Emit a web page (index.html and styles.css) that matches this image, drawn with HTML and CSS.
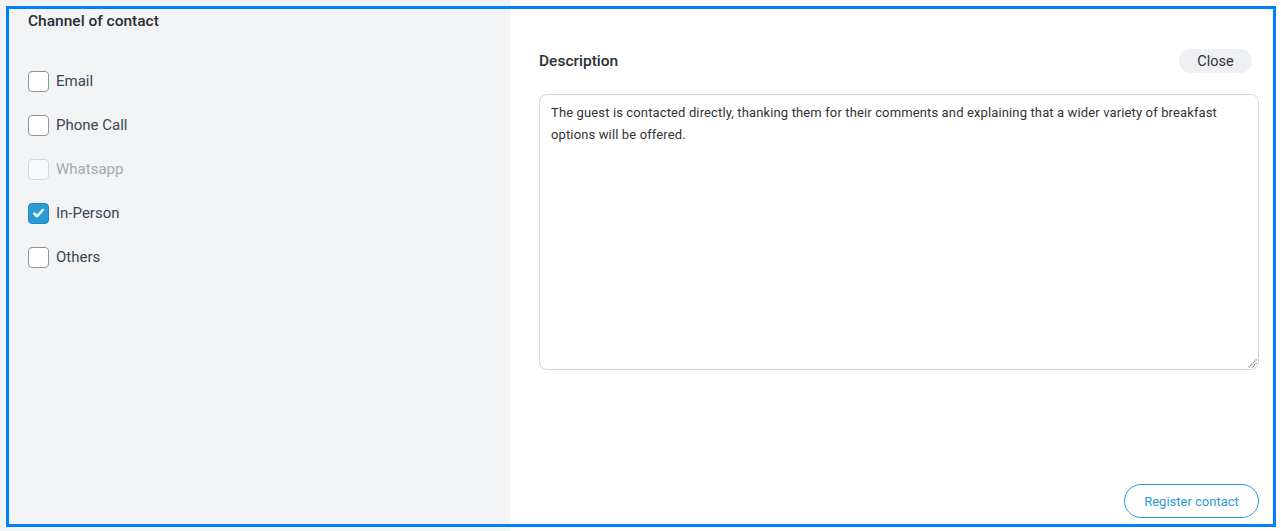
FILE: index.html
```html
<!DOCTYPE html>
<html>
<head>
<meta charset="utf-8">
<link rel="stylesheet" href="styles.css">
</head>
<body>
<div class="page">
  <aside class="side">
    <h2 class="side-title">Channel of contact</h2>
    <ul class="options">
      <li class="opt"><span class="box"></span><span class="lbl">Email</span></li>
      <li class="opt"><span class="box"></span><span class="lbl">Phone Call</span></li>
      <li class="opt disabled"><span class="box"></span><span class="lbl">Whatsapp</span></li>
      <li class="opt checked"><span class="box"><svg viewBox="0 0 20 20" width="20" height="20"><path d="M5.5 10.5 L8.6 13.4 L14.5 6.8" fill="none" stroke="#fff" stroke-width="2.6" stroke-linecap="round" stroke-linejoin="round"/></svg></span><span class="lbl">In-Person</span></li>
      <li class="opt"><span class="box"></span><span class="lbl">Others</span></li>
    </ul>
  </aside>
  <main class="main">
    <div class="head">
      <h3 class="head-title">Description</h3>
      <button class="close">Close</button>
    </div>
    <div class="area">The guest is contacted directly, thanking them for their comments and explaining that a wider variety of breakfast options will be offered.<svg class="grip" viewBox="0 0 10 10" width="10" height="10"><path d="M9.5 1.5 L1.5 9.5 M9.5 5 L5 9.5" stroke="#777" stroke-width="1.2" stroke-dasharray="1.2 0.8"/></svg></div>
    <div class="foot"><button class="register">Register contact</button></div>
  </main>
  <div class="focus-ring"></div>
</div>
</body>
</html>
```
FILE: styles.css
```css
* { box-sizing: border-box; }
html, body { margin: 0; padding: 0; }
body { font-family: Roboto, "Liberation Sans", sans-serif; width: 1281px; height: 531px; overflow: hidden; }
.page { position: relative; display: flex; width: 1281px; height: 531px; }
.side { width: 510px; background: #f2f3f5; padding: 11px 0 0 28px; }
.side-title { margin: 0; font-size: 15.5px; font-weight: 500; color: #2b2f36; line-height: 20px; }
.options { list-style: none; margin: 40px 0 0; padding: 0; display: flex; flex-direction: column; gap: 24px; }
.opt { display: flex; align-items: center; height: 20px; gap: 7px; }
.box { width: 21px; height: 21px; border: 1px solid #8e949e; border-radius: 4px; background: #fff; display: flex; align-items: center; justify-content: center; }
.box svg { display: block; }
.lbl { font-size: 15px; color: #3a4656; }
.disabled .box { border-color: #d3d6db; background: #f7f8fa; }
.disabled .lbl { color: #a3a9b1; }
.checked .box { background: #2b9bd6; border-color: #2586bb; }
.main { flex: 1; background: #fff; padding: 49px 22px 13px 29px; display: flex; flex-direction: column; }
.head { display: flex; align-items: center; justify-content: space-between; height: 24px; padding-right: 7px; }
.head-title { margin: 0; font-size: 15.5px; font-weight: 500; color: #2b2f36; }
.close { border: none; background: #eef0f3; border-radius: 12px; height: 24px; width: 73px; font: 400 14.5px Roboto, sans-serif; color: #333; padding: 0; }
.area { position: relative; margin-top: 21px; height: 276px; border: 1px solid #d2d4d9; border-radius: 8px; padding: 7px 11px; font-size: 13px; letter-spacing: 0.13px; line-height: 22px; color: #333; }
.grip { position: absolute; right: 1px; bottom: 1px; }
.foot { margin-top: auto; display: flex; justify-content: flex-end; }
.register { height: 34px; width: 135px; border: 1px solid #2b9bd6; border-radius: 17px; background: #fff; color: #2b9bd6; font: 400 13px Roboto, sans-serif; padding: 0; }
.focus-ring { position: absolute; left: 6px; top: 6px; width: 1270px; height: 521px; border: 3px solid #0080ff; pointer-events: none; }
```
